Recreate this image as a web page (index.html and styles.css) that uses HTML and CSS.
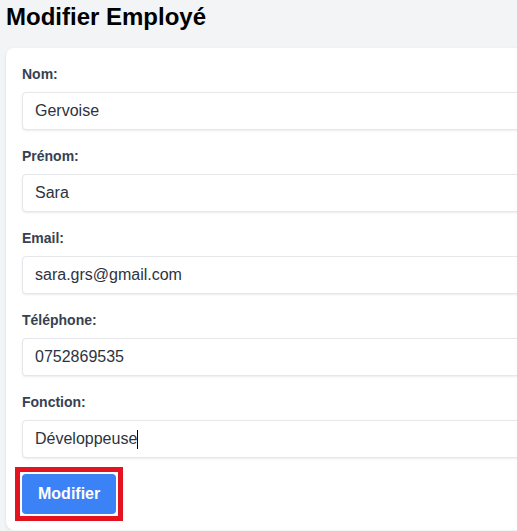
FILE: index.html
```html
<!DOCTYPE html>
<html lang="fr">
<head>
<meta charset="utf-8">
<title>Modifier Employé</title>
<link rel="stylesheet" href="styles.css">
</head>
<body>
<h1 class="title">Modifier Employé</h1>
<form class="card">
  <div class="field">
    <label class="label" for="nom">Nom:</label>
    <input class="input" id="nom" type="text" value="Gervoise">
  </div>
  <div class="field">
    <label class="label" for="prenom">Prénom:</label>
    <input class="input" id="prenom" type="text" value="Sara">
  </div>
  <div class="field">
    <label class="label" for="email">Email:</label>
    <input class="input" id="email" type="text" value="sara.grs@gmail.com">
  </div>
  <div class="field">
    <label class="label" for="tel">Téléphone:</label>
    <input class="input" id="tel" type="text" value="0752869535">
  </div>
  <div class="field">
    <label class="label" for="fonction">Fonction:</label>
    <div class="input">Développeuse<span class="caret"></span></div>
  </div>
  <div class="actions">
    <span class="highlight"><button class="btn" type="button">Modifier</button></span>
  </div>
</form>
</body>
</html>
```

FILE: styles.css
```css
html {
  overflow: hidden;
  background: #f3f4f6;
}
body {
  margin: 0;
  padding: 0 6px;
  font-family: "Liberation Sans", Arial, sans-serif;
  color: #111827;
}
.title {
  margin: 0;
  padding-top: 3px;
  font-size: 24px;
  line-height: 28px;
  font-weight: 700;
  color: #000;
}
.card {
  margin-top: 17px;
  width: 620px;
  background: #fff;
  border-radius: 8px;
  box-shadow: 0 1px 3px rgba(0, 0, 0, 0.1);
  padding: 16px;
  display: flex;
  flex-direction: column;
  gap: 16px;
  box-sizing: border-box;
}
.field {
  display: flex;
  flex-direction: column;
  gap: 8px;
}
.label {
  font-size: 14px;
  line-height: 20px;
  font-weight: 700;
  color: #374151;
}
.input {
  box-sizing: border-box;
  height: 38px;
  width: 100%;
  border: 1px solid #e5e7eb;
  border-radius: 4px;
  box-shadow: 0 1px 2px rgba(0, 0, 0, 0.08);
  padding: 0 12px;
  font-family: "Liberation Sans", Arial, sans-serif;
  font-size: 16px;
  color: #2d3340;
  background: #fff;
  display: flex;
  align-items: center;
}
.caret {
  display: inline-block;
  width: 1px;
  height: 19px;
  background: #000;
}
.actions {
  display: flex;
}
.highlight {
  display: flex;
  margin: -7px;
  padding: 2px;
  border: 5px solid #e3131f;
  background: #fff;
}
.btn {
  height: 40px;
  padding: 0 16px;
  border: none;
  border-radius: 4px;
  background: #3b82f6;
  color: #fff;
  font-family: "Liberation Sans", Arial, sans-serif;
  font-size: 16px;
  font-weight: 700;
}
```
